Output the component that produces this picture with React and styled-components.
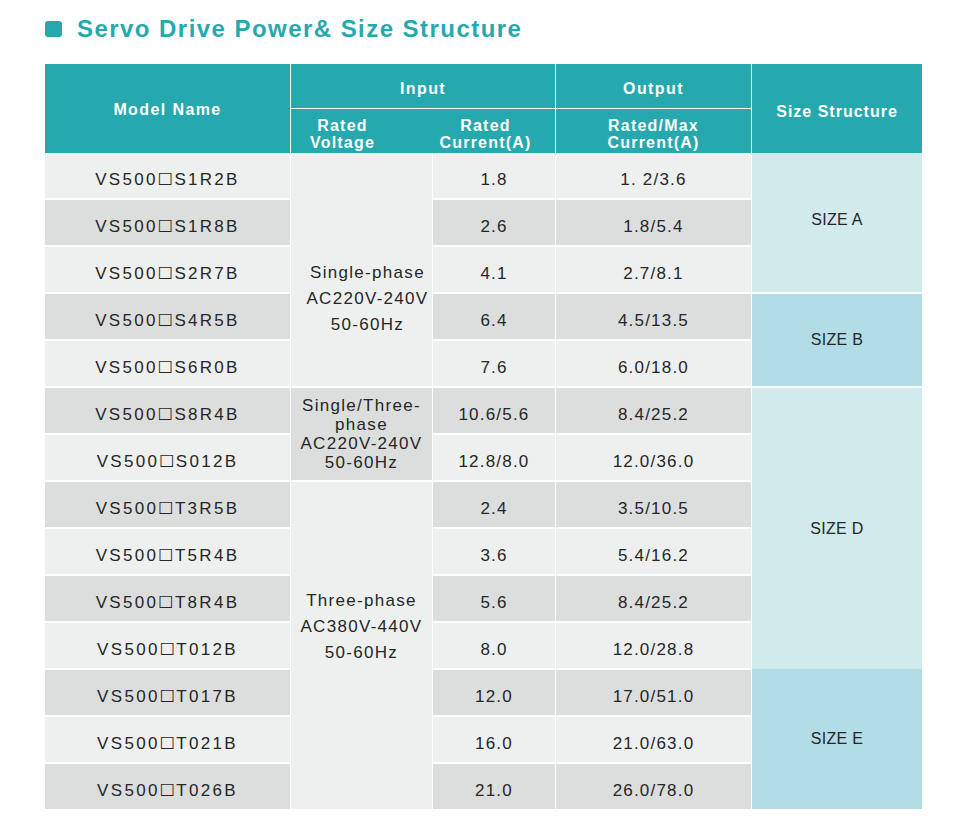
import React from 'react';
import styled, { createGlobalStyle } from 'styled-components';

const TEAL = '#25a9ae';
const LIGHT = '#eef0ef';
const DARK = '#dcdedd';
const SIZE_LIGHT = '#d1eaec';
const SIZE_DARK = '#b2dde6';

const GlobalStyle = createGlobalStyle`
    body {
        margin: 0;
        background: #fff;
        font-family: "Liberation Sans", Arial, sans-serif;
    }
`;

const Page = styled.div`
    width: 960px;
    height: 834px;
    box-sizing: border-box;
    padding: 14px 0 0 45px;
`;

const Title = styled.h2`
    display: flex;
    align-items: center;
    gap: 15px;
    margin: 0 0 20px;
    height: 30px;
    color: ${TEAL};
    font-size: 24px;
    font-weight: 700;
    letter-spacing: 1.45px;
`;

const Bullet = styled.span`
    width: 17px;
    height: 16px;
    border-radius: 3px;
    background: ${TEAL};
`;

const Head = styled.div`
    display: grid;
    grid-template-columns: 245px 264px 195px 170px;
    grid-template-rows: 44px 44px;
    gap: 1px;
    width: 877px;
    background: #fff;
`;

const HeadCell = styled.div`
    display: flex;
    align-items: center;
    justify-content: center;
    text-align: center;
    box-sizing: border-box;
    padding-top: ${(p) => p.$top || 2}px;
    background: ${TEAL};
    color: #fff;
    font-weight: 700;
    font-size: 16px;
    letter-spacing: ${(p) => p.$track || 1}px;
    line-height: 17px;
    grid-column: ${(p) => p.$col};
    grid-row: ${(p) => p.$row};
`;

const HeadPair = styled.div`
    display: flex;
    grid-column: 2;
    grid-row: 2;
    background: ${TEAL};
`;

const HeadHalf = styled.div`
    width: ${(p) => p.$w}px;
    box-sizing: border-box;
    display: flex;
    align-items: center;
    justify-content: center;
    text-align: center;
    padding: 5px ${(p) => p.$shift || 0}px 0 0;
    color: #fff;
    font-weight: 700;
    font-size: 16px;
    letter-spacing: 1.2px;
    line-height: 17px;
`;

const Body = styled.div`
    display: grid;
    grid-template-columns: 245px 141px 122px 195px 170px;
    grid-template-rows: repeat(14, 45px);
    column-gap: 1px;
    row-gap: 2px;
    width: 877px;
    background: #fff;
`;

const Cell = styled.div`
    display: flex;
    align-items: center;
    justify-content: center;
    padding-top: 8px;
    box-sizing: border-box;
    background: ${(p) => (p.$dark ? DARK : LIGHT)};
    color: #262626;
    font-size: 17px;
    letter-spacing: ${(p) => p.$track || 1.2}px;
    grid-column: ${(p) => p.$col};
    grid-row: ${(p) => p.$row};
`;

const Box = styled.span`
    font-family: "DejaVu Sans", sans-serif;
    font-size: 16px;
    letter-spacing: 1.5px;
    position: relative;
    top: -2px;
`;

const VoltCell = styled.div`
    display: flex;
    align-items: center;
    justify-content: center;
    text-align: center;
    box-sizing: border-box;
    padding: ${(p) => p.$pad || '0'};
    background: ${(p) => (p.$dark ? DARK : LIGHT)};
    color: #262626;
    font-size: 17px;
    letter-spacing: 1.3px;
    line-height: ${(p) => p.$lh || 26}px;
    grid-column: 2;
    grid-row: ${(p) => p.$row};
`;

const SizeCell = styled.div`
    display: flex;
    align-items: center;
    justify-content: center;
    padding-bottom: ${(p) => p.$lift || 0}px;
    background: ${(p) => (p.$dark ? SIZE_DARK : SIZE_LIGHT)};
    color: #262626;
    font-size: 16px;
    letter-spacing: 0.3px;
    grid-column: 5;
    grid-row: ${(p) => p.$row};
    flex: ${(p) => p.$flex || 'none'};
`;

const SizeStack = styled.div`
    display: flex;
    flex-direction: column;
    grid-column: 5;
    grid-row: 6 / 15;
`;

const rows = [
    ['S1R2B', '1.8', '1. 2/3.6'],
    ['S1R8B', '2.6', '1.8/5.4'],
    ['S2R7B', '4.1', '2.7/8.1'],
    ['S4R5B', '6.4', '4.5/13.5'],
    ['S6R0B', '7.6', '6.0/18.0'],
    ['S8R4B', '10.6/5.6', '8.4/25.2'],
    ['S012B', '12.8/8.0', '12.0/36.0'],
    ['T3R5B', '2.4', '3.5/10.5'],
    ['T5R4B', '3.6', '5.4/16.2'],
    ['T8R4B', '5.6', '8.4/25.2'],
    ['T012B', '8.0', '12.0/28.8'],
    ['T017B', '12.0', '17.0/51.0'],
    ['T021B', '16.0', '21.0/63.0'],
    ['T026B', '21.0', '26.0/78.0'],
];

const App = () => {
    return (
        <Page>
            <GlobalStyle />
            <Title>
                <Bullet />
                Servo Drive Power& Size Structure
            </Title>
            <Head>
                <HeadCell $col="1" $row="1 / 3" $track={1.4}>
                    Model Name
                </HeadCell>
                <HeadCell $col="2" $row="1" $top={4} $track={1.4}>
                    Input
                </HeadCell>
                <HeadCell $col="3" $row="1" $top={4} $track={1.4}>
                    Output
                </HeadCell>
                <HeadCell $col="4" $row="1 / 3" $top={6}>
                    Size Structure
                </HeadCell>
                <HeadPair>
                    <HeadHalf $w={141} $shift={38}>
                        Rated
                        <br />
                        Voltage
                    </HeadHalf>
                    <HeadHalf $w={123} $shift={16}>
                        Rated
                        <br />
                        Current(A)
                    </HeadHalf>
                </HeadPair>
                <HeadCell $col="3" $row="2" $top={5} $track={1.2}>
                    Rated/Max
                    <br />
                    Current(A)
                </HeadCell>
            </Head>
            <Body>
                {rows.map(([code, current, output], i) => (
                    <React.Fragment key={code}>
                        <Cell $col="1" $row={i + 1} $dark={i % 2 === 1} $track={2.3}>
                            VS500<Box>□</Box>
                            {code}
                        </Cell>
                        <Cell $col="3" $row={i + 1} $dark={i % 2 === 1}>
                            {current}
                        </Cell>
                        <Cell $col="4" $row={i + 1} $dark={i % 2 === 1}>
                            {output}
                        </Cell>
                    </React.Fragment>
                ))}
                <VoltCell $row="1 / 6" $pad="58px 0 0 12px">
                    Single-phase
                    <br />
                    AC220V-240V
                    <br />
                    50-60Hz
                </VoltCell>
                <VoltCell $row="6 / 8" $dark $lh={19}>
                    Single/Three-
                    <br />
                    phase
                    <br />
                    AC220V-240V
                    <br />
                    50-60Hz
                </VoltCell>
                <VoltCell $row="8 / 15" $pad="0 0 38px">
                    Three-phase
                    <br />
                    AC380V-440V
                    <br />
                    50-60Hz
                </VoltCell>
                <SizeCell $row="1 / 4" $lift={6}>
                    SIZE A
                </SizeCell>
                <SizeCell $row="4 / 6" $dark>
                    SIZE B
                </SizeCell>
                <SizeStack>
                    <SizeCell $flex="281">SIZE D</SizeCell>
                    <SizeCell $flex="140" $dark>
                        SIZE E
                    </SizeCell>
                </SizeStack>
            </Body>
        </Page>
    );
};

export default App;
